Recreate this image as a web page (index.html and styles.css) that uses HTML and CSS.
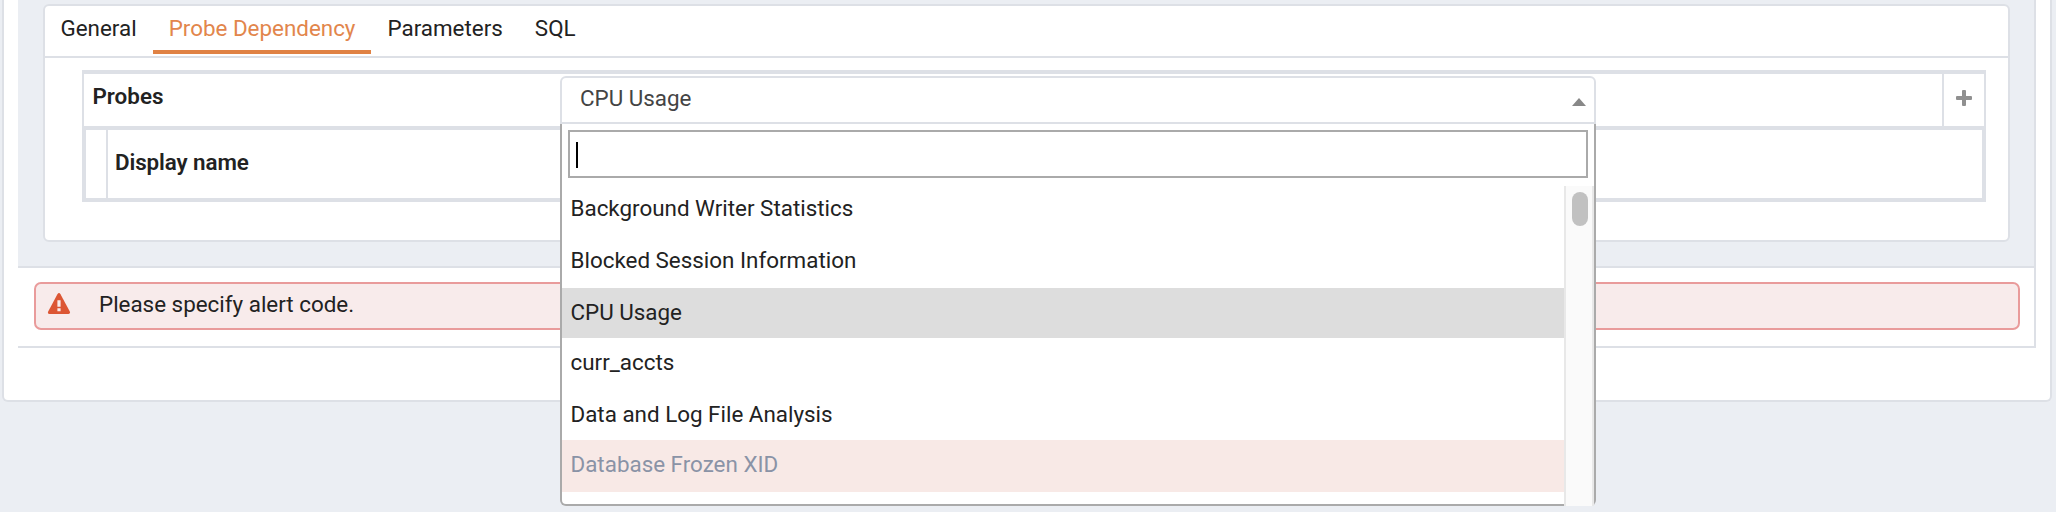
FILE: index.html
```html
<!DOCTYPE html>
<html lang="en">
<head>
<meta charset="utf-8">
<title>Alert template</title>
<link rel="stylesheet" href="styles.css">
</head>
<body>
<main class="outer">
  <div class="panel">
    <div class="content">
      <section class="card">
        <nav class="tabs">
          <a class="tab">General</a>
          <a class="tab active">Probe Dependency</a>
          <a class="tab">Parameters</a>
          <a class="tab">SQL</a>
        </nav>
        <div class="grid">
          <div class="grid-head">
            <span class="grid-title">Probes</span>
            <button class="add" aria-label="Add"><svg width="16" height="16" viewBox="0 0 16 16"><path d="M7 0h2q1 0 1 1v5h5q1 0 1 1v2q0 1-1 1h-5v5q0 1-1 1H7q-1 0-1-1v-5H1q-1 0-1-1V7q0-1 1-1h5V1q0-1 1-1z" fill="#909090"/></svg></button>
          </div>
          <div class="grid-table">
            <div class="cell-tool"></div>
            <div class="cell-name">Display name</div>
          </div>
        </div>
      </section>
    </div>
    <div class="footer">
      <div class="alert">
        <svg class="warn" width="24" height="22" viewBox="0 0 24 22"><path d="M10.4 1.2q1.6-2.2 3.1 0l9.3 17.3q.8 2.3-1.3 2.5h-19q-2.2-.2-1.3-2.5z" fill="#dc5634"/><path d="M10.4 7.2h3.2v6.6h-3.2zM10.4 15.2h3.2v3h-3.2z" fill="#f8ebeb"/></svg>
        <span>Please specify alert code.</span>
      </div>
    </div>
  </div>
</main>
<div class="select">
  <div class="selection"><span>CPU Usage</span><svg class="arrow" width="14" height="8" viewBox="0 0 14 8"><path d="M7 0L14 8H0z" fill="#888"/></svg></div>
  <div class="dropdown">
    <div class="search"><i class="caret"></i></div>
    <div class="results">
      <ul class="options">
        <li>Background Writer Statistics</li>
        <li>Blocked Session Information</li>
        <li class="selected short">CPU Usage</li>
        <li>curr_accts</li>
        <li class="short">Data and Log File Analysis</li>
        <li class="disabled">Database Frozen XID</li>
      </ul>
      <div class="scrollbar"><div class="thumb"></div></div>
    </div>
  </div>
</div>
</body>
</html>
```
FILE: styles.css
```css
* { box-sizing: border-box; }
body {
  margin: 0;
  height: 512px;
  overflow: hidden;
  background: #ebeef3;
  color: #222;
  font: 22.4px/32px Roboto, sans-serif;
}
.outer {
  margin: 0 4px 0 2px;
  height: 402px;
  padding: 0 14px 0 14px;
  background: #fff;
  border: 2px solid #dde0e6;
  border-top: 0;
  border-radius: 0 0 6px 6px;
}
.panel {
  height: 348px;
  border: solid #dde0e6;
  border-width: 0 2px 2px 0;
}
.content {
  height: 268px;
  padding: 4px 24px 0 25px;
  background: #ebeef3;
  border-bottom: 2px solid #dde0e6;
}
.card {
  height: 238px;
  background: #fff;
  border: 2px solid #dde0e6;
  border-radius: 6px;
}
.tabs {
  display: flex;
  height: 52px;
  border-bottom: 2px solid #dde0e6;
}
.tab {
  height: 48px;
  padding: 6px 16px 0;
}
.tab:first-child { padding-left: 15.5px; }
.tab.active {
  color: #e2864c;
  border-bottom: 4px solid #e08244;
}
.grid {
  margin: 12px 22px 0 37px;
}
.grid-head {
  display: flex;
  justify-content: space-between;
  height: 56px;
  border: solid #dde0e6;
  border-width: 4px 2px 0;
}
.grid-title {
  padding: 6px 0 0 8.5px;
  font-weight: 600;
}
.add {
  width: 42px;
  padding: 3px 0 0;
  border: 0;
  border-left: 2px solid #dde0e6;
  background: none;
}
.add svg { display: block; margin: -7px auto 0; }
.grid-table {
  display: flex;
  height: 76px;
  border: 4px solid #dde0e6;
}
.cell-tool {
  width: 22px;
  border-right: 2px solid #dde0e6;
}
.cell-name {
  padding: 16px 0 0 7px;
  font-weight: 600;
  letter-spacing: -0.1px;
}
.footer { padding: 14px 14px 0 16px; }
.alert {
  display: flex;
  height: 48px;
  padding: 4px 0 0 11px;
  background: #f8ebeb;
  border: 2px solid #e99b9b;
  border-radius: 7px;
}
.warn { margin: 5px 28px 0 0; }
.select {
  position: absolute;
  left: 560px;
  top: 76px;
  width: 1036px;
}
.selection {
  display: flex;
  justify-content: space-between;
  height: 48px;
  padding: 4px 8px 0 18px;
  background: #fff;
  border: 2px solid #dde0e6;
  border-radius: 6px 6px 0 0;
  color: #444;
}
.arrow { margin-top: 16px; }
.dropdown {
  height: 382px;
  padding-top: 6px;
  background: #fff;
  border: solid #aaa;
  border-width: 0 2px 2px;
  border-radius: 0 0 6px 6px;
}
.search {
  height: 48px;
  margin: 0 6px;
  padding: 10px 6px;
  border: 2px solid #aaa;
}
.caret {
  display: block;
  width: 2px;
  height: 26px;
  background: #000;
}
.results {
  display: flex;
  height: 320px;
  margin-top: 8px;
}
.options {
  flex: 1;
  margin: -2px 0 0;
  padding: 0;
  list-style: none;
}
.options li {
  height: 52px;
  padding: 8px 0 0 8.5px;
}
.options .short { height: 50px; }
.options .selected { background: #ddd; }
.options .disabled { background: #f8e9e6; color: #8a93a6; }
.scrollbar {
  width: 30px;
  padding: 6px 4px 0 6px;
  background: #fafafa;
  border: solid #e8e8e8;
  border-width: 0 2px;
}
.thumb {
  width: 16px;
  height: 34px;
  background: #c1c1c1;
  border-radius: 8px;
}
```
